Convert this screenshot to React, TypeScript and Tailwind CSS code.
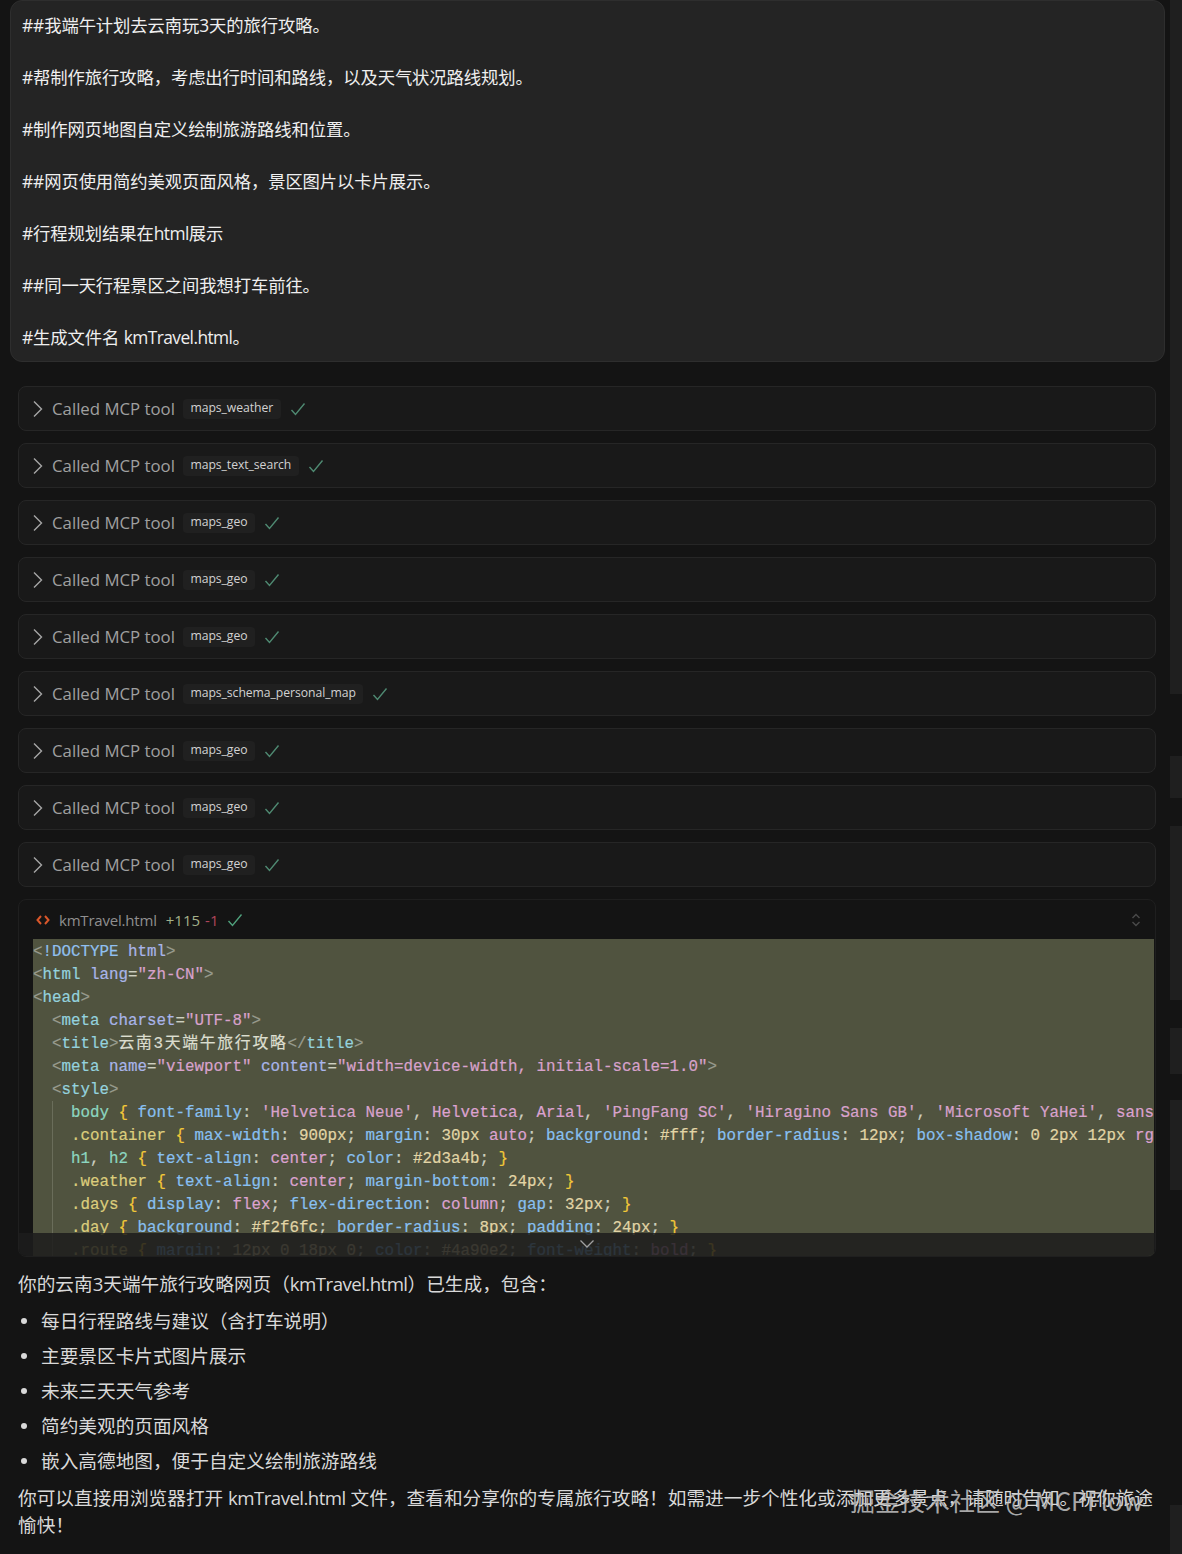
import type { ReactNode } from "react";

const sans = "font-['Open_Sans','Noto_Sans_CJK_SC',sans-serif]";

const C = {
  br: "#9a9d90",
  tag: "#94d2de",
  attr: "#a9b5ea",
  eq: "#cdcfc0",
  str: "#d8a2cc",
  doc: "#90c0f0",
  tx: "#dcdecf",
  sel: "#dccd7c",
  teal: "#8cd6c0",
  bra: "#f2c838",
  prop: "#88c0f2",
  num: "#e2d5a6",
  val: "#dca2d0",
};

type Tok = [string, string];
const lines: { indent: number; toks: Tok[] }[] = [
  { indent: 0, toks: [["<", C.br], ["!DOCTYPE ", C.doc], ["html", C.attr], [">", C.br]] },
  { indent: 0, toks: [["<", C.br], ["html ", C.tag], ["lang", C.attr], ["=", C.eq], ['"zh-CN"', C.str], [">", C.br]] },
  { indent: 0, toks: [["<", C.br], ["head", C.tag], [">", C.br]] },
  { indent: 2, toks: [["<", C.br], ["meta ", C.tag], ["charset", C.attr], ["=", C.eq], ['"UTF-8"', C.str], [">", C.br]] },
  { indent: 2, toks: [["<", C.br], ["title", C.tag], [">", C.br], ["云南3天端午旅行攻略", C.tx], ["</", C.br], ["title", C.tag], [">", C.br]] },
  { indent: 2, toks: [["<", C.br], ["meta ", C.tag], ["name", C.attr], ["=", C.eq], ['"viewport" ', C.str], ["content", C.attr], ["=", C.eq], ['"width=device-width, initial-scale=1.0"', C.str], [">", C.br]] },
  { indent: 2, toks: [["<", C.br], ["style", C.tag], [">", C.br]] },
  { indent: 4, toks: [["body ", C.teal], ["{ ", C.bra], ["font-family", C.prop], [": ", C.eq], ["'Helvetica Neue'", C.str], [", ", C.eq], ["Helvetica", C.val], [", ", C.eq], ["Arial", C.val], [", ", C.eq], ["'PingFang SC'", C.str], [", ", C.eq], ["'Hiragino Sans GB'", C.str], [", ", C.eq], ["'Microsoft YaHei'", C.str], [", ", C.eq], ["sans-serif", C.val], ["; ", C.eq]] },
  { indent: 4, toks: [[".container ", C.sel], ["{ ", C.bra], ["max-width", C.prop], [": ", C.eq], ["900px", C.num], ["; ", C.eq], ["margin", C.prop], [": ", C.eq], ["30px ", C.num], ["auto", C.val], ["; ", C.eq], ["background", C.prop], [": ", C.eq], ["#fff", C.num], ["; ", C.eq], ["border-radius", C.prop], [": ", C.eq], ["12px", C.num], ["; ", C.eq], ["box-shadow", C.prop], [": ", C.eq], ["0 2px 12px ", C.num], ["rgba(0,0,0,0.08)", C.val]] },
  { indent: 4, toks: [["h1", C.teal], [", ", C.eq], ["h2 ", C.teal], ["{ ", C.bra], ["text-align", C.prop], [": ", C.eq], ["center", C.val], ["; ", C.eq], ["color", C.prop], [": ", C.eq], ["#2d3a4b", C.num], ["; ", C.eq], ["}", C.bra]] },
  { indent: 4, toks: [[".weather ", C.sel], ["{ ", C.bra], ["text-align", C.prop], [": ", C.eq], ["center", C.val], ["; ", C.eq], ["margin-bottom", C.prop], [": ", C.eq], ["24px", C.num], ["; ", C.eq], ["}", C.bra]] },
  { indent: 4, toks: [[".days ", C.sel], ["{ ", C.bra], ["display", C.prop], [": ", C.eq], ["flex", C.val], ["; ", C.eq], ["flex-direction", C.prop], [": ", C.eq], ["column", C.val], ["; ", C.eq], ["gap", C.prop], [": ", C.eq], ["32px", C.num], ["; ", C.eq], ["}", C.bra]] },
  { indent: 4, toks: [[".day ", C.sel], ["{ ", C.bra], ["background", C.prop], [": ", C.eq], ["#f2f6fc", C.num], ["; ", C.eq], ["border-radius", C.prop], [": ", C.eq], ["8px", C.num], ["; ", C.eq], ["padding", C.prop], [": ", C.eq], ["24px", C.num], ["; ", C.eq], ["}", C.bra]] },
  { indent: 4, toks: [[".route ", C.sel], ["{ ", C.bra], ["margin", C.prop], [": ", C.eq], ["12px 0 18px 0", C.num], ["; ", C.eq], ["color", C.prop], [": ", C.eq], ["#4a90e2", C.num], ["; ", C.eq], ["font-weight", C.prop], [": ", C.eq], ["bold", C.val], ["; ", C.eq], ["}", C.bra]] },
];

function Lat({ children }: { children: ReactNode }) {
  return <span className="tracking-[-0.55px]">{children}</span>;
}

function Chevron() {
  return (
    <svg width="12" height="18" viewBox="0 0 12 18" fill="none" stroke="#a6a6a6" strokeWidth="1.4" className="shrink-0">
      <polyline points="2,1.5 9.5,9 2,16.5" />
    </svg>
  );
}

function Tick({ color = "#4f8a72" }: { color?: string }) {
  return (
    <svg width="16" height="14" viewBox="0 0 16 14" fill="none" stroke={color} strokeWidth="1.4" className="shrink-0">
      <polyline points="1.5,8 5.5,12.5 14.5,1.5" />
    </svg>
  );
}

function ToolRow({ name }: { name: string }) {
  return (
    <div className="flex h-[45px] items-center rounded-[8px] border border-[#262626] bg-[#191919] pl-[13px]">
      <Chevron />
      <span className="ml-[8px] pt-[2px] text-[16.8px] leading-none text-[#a0a0a0]">Called MCP tool</span>
      <span className="ml-[8px] flex h-[20px] items-center rounded-[4px] bg-[#202020] px-[7.5px] pb-[1px] text-[12.2px] tracking-[-0.05px] text-[#d2d2d2]">
        {name}
      </span>
      <span className="ml-[9px] flex">
        <Tick />
      </span>
    </div>
  );
}

const tools = ["maps_weather", "maps_text_search", "maps_geo", "maps_geo", "maps_geo", "maps_schema_personal_map", "maps_geo", "maps_geo", "maps_geo"];
const prompt: ReactNode[] = [
  "##我端午计划去云南玩3天的旅行攻略。",
  "#帮制作旅行攻略，考虑出行时间和路线，以及天气状况路线规划。",
  "#制作网页地图自定义绘制旅游路线和位置。",
  "##网页使用简约美观页面风格，景区图片以卡片展示。",
  <>#行程规划结果在<Lat>html</Lat>展示</>,
  "##同一天行程景区之间我想打车前往。",
  <>#生成文件名 <Lat>kmTravel.html</Lat>。</>,
];
const bullets = ["每日行程路线与建议（含打车说明）", "主要景区卡片式图片展示", "未来三天天气参考", "简约美观的页面风格", "嵌入高德地图，便于自定义绘制旅游路线"];

export default function App() {
  return (
    <div className={`relative h-[1554px] w-[1182px] overflow-hidden bg-[#141414] ${sans}`}>
      {/* scrollbar / minimap slices */}
      <div className="absolute right-0 top-[0px] h-[694px] w-[12px] bg-[#1f1f1f]" />
      <div className="absolute right-0 top-[756px] h-[42px] w-[12px] bg-[#1f1f1f]" />
      <div className="absolute right-0 top-[826px] h-[174px] w-[12px] bg-[#1f1f1f]" />
      <div className="absolute right-0 top-[1028px] h-[46px] w-[12px] bg-[#1f1f1f]" />
      <div className="absolute right-0 top-[1100px] h-[90px] w-[12px] bg-[#1f1f1f]" />
      <div className="absolute right-0 top-[1505px] h-[49px] w-[12px] bg-[#1f1f1f]" />

      <div className="relative w-[1182px]">
        {/* user prompt */}
        <div className="ml-[10px] h-[362px] w-[1155px] rounded-[12px] border border-[#2e2e2e] bg-[#242424] pl-[11px] pt-[11px] text-[17.33px] leading-[26px] text-[#efefef]">
          {prompt.map((p, i) => (
            <div key={i} className="mb-[26px] tracking-[-0.1px]">{p}</div>
          ))}
        </div>

        {/* tool rows */}
        <div className="ml-[18px] mt-[24px] flex w-[1138px] flex-col gap-[12px]">
          {tools.map((t, i) => (
            <ToolRow key={i} name={t} />
          ))}
        </div>

        {/* code block */}
        <div className="relative ml-[18px] mt-[12px] h-[358px] w-[1138px] overflow-hidden rounded-[8px] border border-[#1f1f1f] bg-[#141414]">
          <div className="flex h-[39px] items-center pl-[17px] pr-[14px]">
            <svg width="14" height="12" viewBox="0 0 14 12" fill="none" stroke="#d8562a" strokeWidth="2" className="shrink-0">
              <polyline points="5,2 1.5,6 5,10" />
              <polyline points="9,2 12.5,6 9,10" />
            </svg>
            <span className="ml-[9px] pt-[1px] text-[15px] tracking-[-0.2px] text-[#8f8f8f]">kmTravel.html</span>
            <span className="ml-[9px] pt-[1px] text-[15px] tracking-[0px] text-[#a3b18a]">+115</span>
            <span className="ml-[5px] pt-[1px] text-[15px] tracking-[0.2px] text-[#b0455a]">-1</span>
            <span className="ml-[8px] flex"><Tick color="#4fa07c" /></span>
            <svg width="10" height="14" viewBox="0 0 10 14" fill="none" stroke="#4a4a4a" strokeWidth="1.4" className="ml-auto shrink-0">
              <polyline points="1.5,5 5,1.5 8.5,5" />
              <polyline points="1.5,9 5,12.5 8.5,9" />
            </svg>
          </div>
          <div className="relative ml-[14px] mr-[1px] h-[317px] overflow-hidden bg-[#50533f] pt-[2px] font-['Liberation_Mono','Noto_Sans_CJK_SC',monospace] text-[15.84px] leading-[23px] [-webkit-text-stroke:0.2px]">
            <div className="absolute left-[19px] top-[162px] h-[160px] w-px bg-[#6a6d5a]" />
            {lines.map((l, i) => (
              <div key={i} className="h-[23px] whitespace-pre" style={{ paddingLeft: l.indent * 9.5 }}>
                {l.toks.map((t, j) => (
                  <span key={j} className={/[云]/.test(t[0]) ? "tracking-[1.7px]" : ""} style={{ color: t[1] }}>{t[0]}</span>
                ))}
              </div>
            ))}
          </div>
          <div className="absolute bottom-0 left-0 right-0 flex h-[23px] justify-center bg-[#1c1c1c]/85">
            <svg width="16" height="10" viewBox="0 0 16 10" fill="none" stroke="#a0a0a0" strokeWidth="1.3" className="mt-[6px]">
              <polyline points="1.5,1.5 8,8 14.5,1.5" />
            </svg>
          </div>
        </div>

        {/* summary */}
        <div className="ml-[18px] mt-[13px] w-[1138px] text-[18.67px] text-[#d9d9d9]">
          <div className="h-[27px] leading-[27px]">你的云南3天端午旅行攻略网页（<Lat>kmTravel.html</Lat>）已生成，包含：</div>
          <ul className="mt-[6px]">
            {bullets.map((b) => (
              <li key={b} className="flex h-[35px] items-center leading-[35px]">
                <span className="ml-[3px] mr-[14px] h-[6px] w-[6px] rounded-full bg-[#d9d9d9]" />
                {b}
              </li>
            ))}
          </ul>
          <p className="mt-[6px] whitespace-nowrap leading-[27px]">
            你可以直接用浏览器打开 <Lat>kmTravel.html</Lat> 文件，查看和分享你的专属旅行攻略！如需进一步个性化或添加更多景点，请随时告知。祝你旅途<br />愉快！
          </p>
        </div>
      </div>

      {/* watermark */}
      <div className="absolute left-[850px] top-[1482px] whitespace-nowrap font-['Noto_Sans_CJK_SC',sans-serif] text-[25px] leading-[36px] text-[#c4c4c4]/85">
        掘金技术社区 @ MCPFlow
      </div>
    </div>
  );
}
